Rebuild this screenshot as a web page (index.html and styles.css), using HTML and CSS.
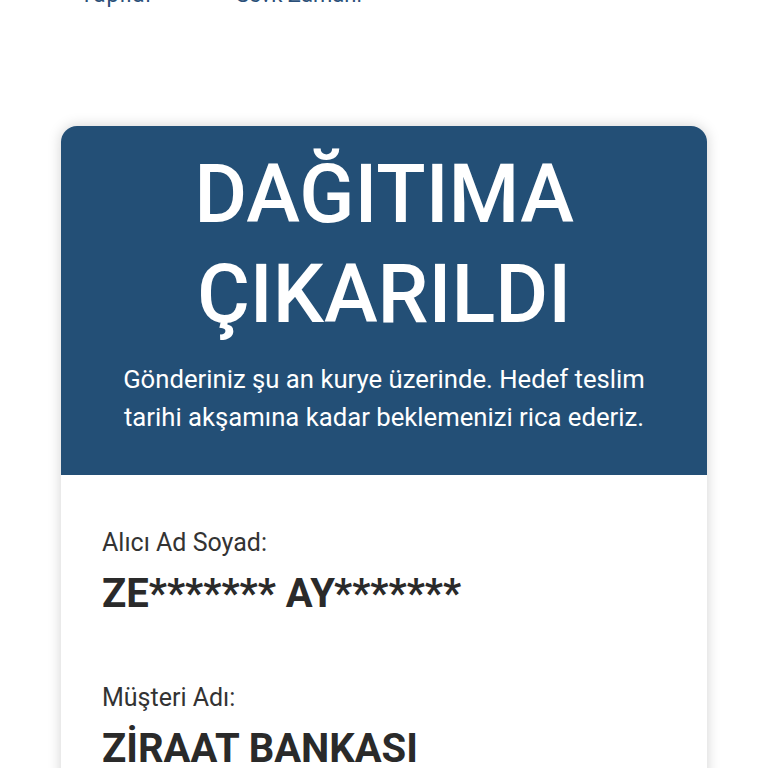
FILE: index.html
```html
<!DOCTYPE html>
<html lang="tr">
<head>
<meta charset="utf-8">
<link rel="stylesheet" href="styles.css">
</head>
<body>
<nav class="topnav">
  <span class="navitem">Yapılar</span>
  <span class="navitem">Sevk Zamanı</span>
</nav>
<main class="card">
  <header class="card-head">
    <h1 class="title">DAĞITIMA<br>ÇIKARILDI</h1>
    <p class="subtitle">Gönderiniz şu an kurye üzerinde. Hedef teslim tarihi akşamına kadar beklemenizi rica ederiz.</p>
  </header>
  <section class="card-body">
    <div class="field">
      <div class="label">Alıcı Ad Soyad:</div>
      <div class="value">ZE******* AY*******</div>
    </div>
    <div class="field">
      <div class="label">Müşteri Adı:</div>
      <div class="value">ZİRAAT BANKASI</div>
    </div>
  </section>
</main>
</body>
</html>
```
FILE: styles.css
```css
html, body {
  margin: 0;
  padding: 0;
  background: #ffffff;
  font-family: Roboto, "Liberation Sans", sans-serif;
  overflow: hidden;
}
.topnav {
  display: flex;
  gap: 82px;
  padding-left: 80px;
  margin-top: -18px;
  height: 26px;
  font-size: 22px;
  line-height: 26px;
  color: #2b5079;
}
.navitem:first-child {
  letter-spacing: 1px;
}
.card {
  margin: 118px 61px 0 61px;
  border-radius: 16px;
  box-shadow: 0 0 14px rgba(0, 0, 0, 0.18);
  overflow: hidden;
  background: #ffffff;
}
.card-head {
  background: #234f76;
  color: #ffffff;
  text-align: center;
  padding: 19px 45px 39px;
}
.title {
  margin: 0;
  font-size: 81px;
  line-height: 100px;
  font-weight: 500;
}
.subtitle {
  margin: 15px 0 0;
  font-size: 25.7px;
  line-height: 38px;
}
.card-body {
  padding: 52px 41px 40px;
}
.field {
  margin-bottom: 64px;
}
.label {
  font-size: 25px;
  line-height: 32px;
  color: #333333;
}
.value {
  margin-top: 11px;
  font-size: 40px;
  line-height: 48px;
  font-weight: 700;
  color: #2a2a2a;
}
```
